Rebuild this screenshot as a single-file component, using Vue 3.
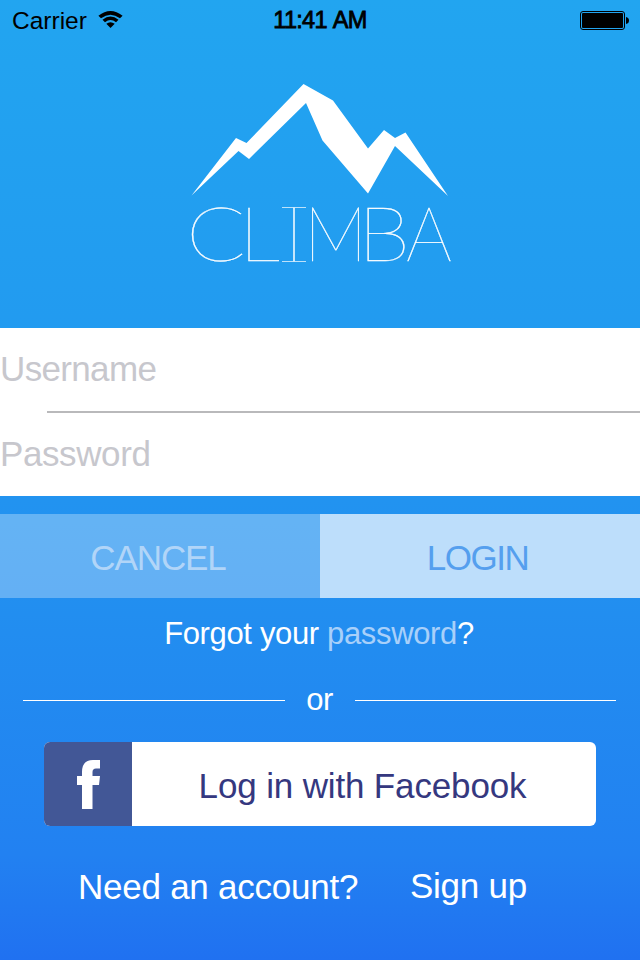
<script setup>
const letters = [
  { ch: 'C', x: 186, w: 60 },
  { ch: 'L', x: 239, w: 41 },
  { ch: 'I', x: 284, w: 20 },
  { ch: 'M', x: 304, w: 63 },
  { ch: 'B', x: 358, w: 52 },
  { ch: 'A', x: 406, w: 46 },
]
</script>

<template>
  <main class="screen">
    <header class="status">
      <div class="carrier">
        <span>Carrier</span>
        <svg class="wifi" width="26" height="18" viewBox="0 0 26 18">
          <path d="M.4 4.700Q12.500-4.700 24.600 4.700L22 7.300Q12.500 0 3 7.300ZM4.500 8.700Q12.500 2.500 20.500 8.700L18 11.200Q12.500 7 7 11.200ZM8.300 12.700Q12.500 9.600 16.700 12.700L12.500 17Z" />
        </svg>
      </div>
      <span class="time">11:41 AM</span>
      <svg class="battery" width="50" height="20" viewBox="0 0 50 20">
        <rect x=".5" y=".5" width="44" height="18" rx="2.500" fill="none" stroke="#000" />
        <rect x="2" y="2" width="41" height="15" rx="1" />
        <path d="M46 6Q49 6.500 49 9.500T46 13Z" />
      </svg>
    </header>

    <svg class="logo" width="280" height="190" viewBox="180 78 280 190">
      <path fill="#fff" d="M191.500 195.500L236 138L246.500 143L303.500 84L333 100.500L368 148.500L384 130L395 138L405.500 132.500L448 196L395 146L368 193.500L322.500 140.500L306 103L249 159L238.500 151Z" />
      <text v-for="l in letters" :key="l.ch" class="mark" :x="l.x" y="261" :textLength="l.w" lengthAdjust="spacingAndGlyphs">{{ l.ch }}</text>
      <path class="rule" d="M282 207.500H306M282 261.500H306" />
    </svg>

    <section class="fields">
      <div class="field user">Username</div>
      <div class="separator"></div>
      <div class="field pass">Password</div>
    </section>

    <div class="actions">
      <button class="cancel">CANCEL</button>
      <button class="login">LOGIN</button>
    </div>

    <p class="forgot">Forgot your <span>password</span>?</p>

    <div class="divider"><i></i><span>or</span><i></i></div>

    <button class="facebook">
      <span class="badge">
        <svg width="24" height="50" viewBox="0 0 24 50">
          <path fill="#fff" d="M5 49V25H0V16H5V12Q5 0 16 0H23V8.500H19Q15.500 8.500 15.500 12V16H23L22 25H15.500V49Z" />
        </svg>
      </span>
      <span class="label">Log in with Facebook</span>
    </button>

    <footer class="signup"><span class="need">Need an account?</span><span class="link">Sign up</span></footer>
  </main>
</template>

<style>
body { margin: 0; }
</style>

<style scoped>
.screen {
  box-sizing: border-box;
  width: 640px;
  height: 960px;
  overflow: hidden;
  display: flex;
  flex-direction: column;
  font-family: "Liberation Sans", Arial, sans-serif;
  font-size: 35px;
  color: #fff;
  background: linear-gradient(#22a5f0 0%, #229bf0 33%, #228ef0 64%, #2281f1 89%, #2071f1 100%);
}
button { border: 0; padding: 0; margin: 0; font: inherit; color: inherit; }
.status {
  display: grid;
  grid-template-columns: 1fr auto 1fr;
  align-items: center;
  height: 41px;
  padding: 0 10px 0 12px;
  color: #000;
  font-size: 24.5px;
  line-height: 41px;
}
.carrier { display: flex; align-items: center; gap: 11px; }
.wifi { margin-top: -1px; }
.time { letter-spacing: -.7px; word-spacing: 1.500px; -webkit-text-stroke: .8px #000; font-size: 23.500px; margin-right: 2px; }
.battery { justify-self: end; }
.logo { margin: 37px 0 0 180px; flex: none; overflow: visible; }
.mark { font-family: Lato, sans-serif; font-weight: 100; font-size: 75.500px; fill: #fff; stroke: #fff; stroke-width: .35px; }
.rule { stroke: #fff; stroke-width: 1; opacity: .7; }
.fields { margin-top: 60px; height: 168px; flex: none; background: #fff; color: #c7c7cd; }
.field { height: 83px; line-height: 82px; }
.user { letter-spacing: -.65px; }
.pass { letter-spacing: -.4px; line-height: 81px; }
.separator { height: 2px; margin-left: 47px; background: #b9b9bb; }
.actions { display: grid; grid-template-columns: 1fr 1fr; height: 84px; flex: none; margin-top: 18px; }
.actions button { line-height: 84px; padding-top: 2px; height: 84px; overflow: hidden; }
.actions .cancel { background: rgba(255, 255, 255, .3); color: #b1d5f8; letter-spacing: -1.100px; padding-right: 4px; }
.actions .login { background: rgba(255, 255, 255, .7); color: #559fee; letter-spacing: -1.500px; padding-right: 5px; }
.forgot { margin: 15px 0 0; padding-right: 2px; height: 42px; line-height: 42px; text-align: center; font-size: 31px; letter-spacing: -.35px; flex: none; }
.forgot span { color: #a8d0fa; }
.divider { display: flex; align-items: center; height: 44px; margin: 23px 24px 0 23px; font-size: 31px; line-height: 44px; flex: none; }
.divider i { height: 1px; flex: 1; background: #fff; margin-top: 1px; }
.divider span { width: 70px; text-align: center; letter-spacing: -.5px; }
.facebook { display: flex; width: 552px; height: 84px; flex: none; margin: 20px 0 0 44px; border-radius: 6px; overflow: hidden; background: #fff; color: #35387f; }
.badge { width: 88px; height: 84px; display: flex; align-items: center; justify-content: center; background: #425796; padding: 1px 0 0 2px; box-sizing: border-box; }
.label { flex: 1; line-height: 88px; text-align: center; letter-spacing: -.15px; padding-right: 3px; }
.signup { display: flex; margin-top: 36px; padding-left: 78px; line-height: 50px; letter-spacing: -.25px; white-space: nowrap; }
.need { width: 332px; }
.link { margin-top: -1px; }
</style>
